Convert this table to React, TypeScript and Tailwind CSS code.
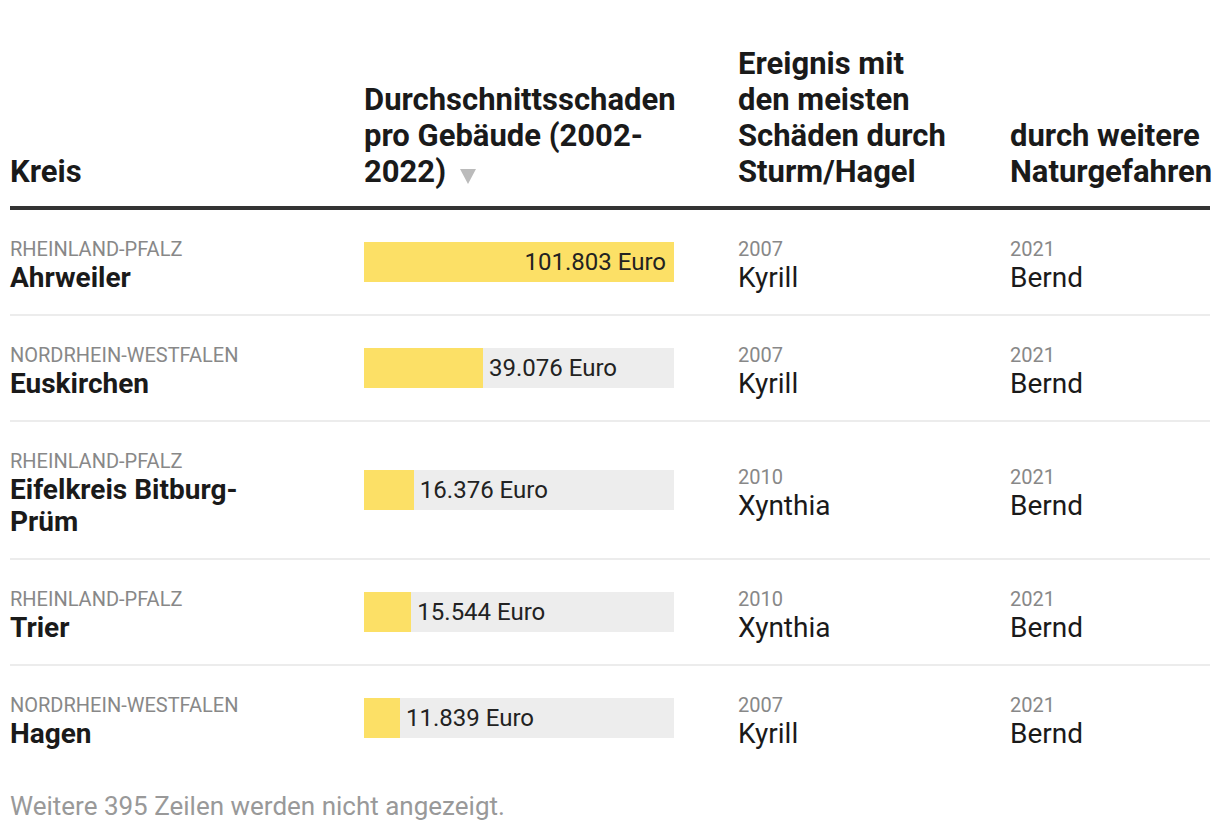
import React from "react";

type Row = {
  land: string;
  kreis: string;
  schaden: number;
  sturmJahr: string;
  sturm: string;
  weitereJahr: string;
  weitere: string;
};

const rows: Row[] = [
  { land: "RHEINLAND-PFALZ", kreis: "Ahrweiler", schaden: 101803, sturmJahr: "2007", sturm: "Kyrill", weitereJahr: "2021", weitere: "Bernd" },
  { land: "NORDRHEIN-WESTFALEN", kreis: "Euskirchen", schaden: 39076, sturmJahr: "2007", sturm: "Kyrill", weitereJahr: "2021", weitere: "Bernd" },
  { land: "RHEINLAND-PFALZ", kreis: "Eifelkreis Bitburg-Prüm", schaden: 16376, sturmJahr: "2010", sturm: "Xynthia", weitereJahr: "2021", weitere: "Bernd" },
  { land: "RHEINLAND-PFALZ", kreis: "Trier", schaden: 15544, sturmJahr: "2010", sturm: "Xynthia", weitereJahr: "2021", weitere: "Bernd" },
  { land: "NORDRHEIN-WESTFALEN", kreis: "Hagen", schaden: 11839, sturmJahr: "2007", sturm: "Kyrill", weitereJahr: "2021", weitere: "Bernd" },
];

const max = 101803;

function fmt(n: number) {
  return n.toLocaleString("de-DE") + " Euro";
}

function Bar({ value }: { value: number }) {
  const pct = (value / max) * 100;
  const inside = pct > 60;
  return (
    <div className="flex h-10 w-[310px] bg-[#ededed] text-[24px] leading-10 text-[#222]">
      <div className="flex h-10 justify-end bg-[#fce066] pr-2" style={{ width: `${pct}%` }}>
        {inside && <span>{fmt(value)}</span>}
      </div>
      {!inside && <span className="pl-[6px]">{fmt(value)}</span>}
    </div>
  );
}

function Cell({ top, main, bold }: { top: string; main: string; bold?: boolean }) {
  return (
    <div className="pt-[7px]">
      <div className="mb-[1px] text-[20px] leading-6 text-[#888]">{top}</div>
      <div className={`text-[28px] leading-8 text-[#1a1a1a] ${bold ? "font-bold" : ""}`}>{main}</div>
    </div>
  );
}

export default function App() {
  return (
    <div className="min-h-[830px] bg-white px-[10px] pt-[46px] font-['Roboto',sans-serif]">
      <div className="w-[1200px]">
        <div className="grid grid-cols-[354px_374px_272px_200px] items-end border-b-4 border-[#333] pb-4 text-[31px] font-bold leading-9 text-[#1a1a1a]">
          <div>Kreis</div>
          <div className="pr-[50px]">
            Durchschnittsschaden pro Gebäude (2002-2022)
            <svg className="ml-[14px] inline-block align-[-2px]" width="16" height="15" viewBox="0 0 16 15">
              <polygon points="0,0 16,0 8,15" fill="#bbb" />
            </svg>
          </div>
          <div className="pr-[50px]">Ereignis mit den meisten Schäden durch Sturm/Hagel</div>
          <div>durch weitere Naturgefahren</div>
        </div>

        {rows.map((r, i) => (
          <div
            key={r.kreis}
            className={`grid grid-cols-[354px_374px_272px_200px] items-center py-5 ${i < rows.length - 1 ? "border-b-2 border-[#ececec]" : ""}`}
          >
            <div className="pr-[100px]">
              <Cell top={r.land} main={r.kreis} bold />
            </div>
            <Bar value={r.schaden} />
            <Cell top={r.sturmJahr} main={r.sturm} />
            <Cell top={r.weitereJahr} main={r.weitere} />
          </div>
        ))}

        <p className="mt-5 text-[26px] leading-8 text-[#999]">Weitere 395 Zeilen werden nicht angezeigt.</p>
      </div>
    </div>
  );
}
